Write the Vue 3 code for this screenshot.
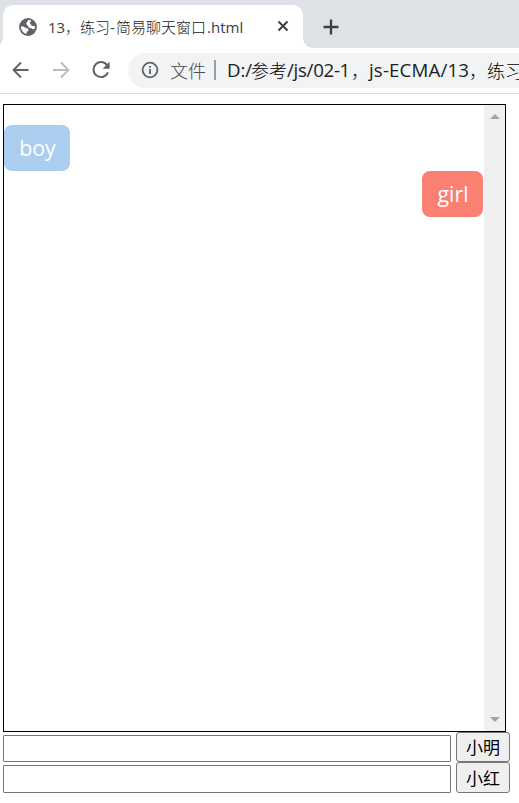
<script setup>
import { ref } from 'vue'

const tabTitle = [
  { text: '13', cls: 't-num' },
  { text: '，', cls: 't-comma' },
  { text: '练习', cls: 't-cjk' },
  { text: '-', cls: 't-dash' },
  { text: '简易聊天窗口', cls: 't-cjk' },
  { text: '.html', cls: 't-ext' }
]
const address = [
  { text: 'D:/', cls: 'u-drive' },
  { text: '参考', cls: 'u-cjk' },
  { text: '/js/02-1', cls: 'u-dir' },
  { text: '，', cls: 'u-comma' },
  { text: 'js-ECMA/13', cls: 'u-name' },
  { text: '，', cls: 'u-comma' },
  { text: '练习', cls: 'u-cjk' }
]
const messages = ref([
  { from: 'boy', text: 'boy' },
  { from: 'girl', text: 'girl' }
])
const senders = ref([
  { from: 'boy', name: '小明', draft: '' },
  { from: 'girl', name: '小红', draft: '' }
])

function send(sender) {
  if (!sender.draft) return
  messages.value.push({ from: sender.from, text: sender.draft })
  sender.draft = ''
}
</script>

<template>
  <div class="window">
    <header class="tabs">
      <div class="tab">
        <svg class="globe" width="18" height="18" viewBox="0 0 18 18">
          <circle cx="9" cy="9" r="8.9" fill="#5f6368" />
          <path d="M9.2 2C10.3 2 11.4 2.2 12.2 2.6C12.2 3.9 11 3.7 10.8 4.7C10.6 5.8 12.2 6.1 12.3 7.2C12.5 8.2 14 7.8 16 8.3C16 9.4 15.8 10.4 15.4 11.3C13.5 11.5 12.7 10.4 11.2 10.1C9.7 9.9 9 9.2 9 8.1C9 7 7.2 6.9 7.2 5.5C7.3 4.2 8.9 3.7 9.2 2Z" fill="#fff" />
          <path d="M2 8.6C4 8.1 5.4 8.8 6.2 9.5C7 10.3 8.7 9.9 9.3 11C9.9 12.1 9.3 13.3 8.2 13.6C7.3 13.9 7.6 15.1 7.4 15.9C4.4 15.2 1.9 12.4 2 8.6Z" fill="#fff" />
        </svg>
        <div class="title"><span v-for="(part, i) in tabTitle" :key="i" :class="part.cls">{{ part.text }}</span></div>
        <svg class="close" width="12" height="12" viewBox="0 0 12 12"><path d="M1.5 1.5 10.5 10.5M10.5 1.5 1.5 10.5" fill="none" stroke="#3c4043" stroke-width="2" /></svg>
      </div>
      <svg class="plus" width="16" height="16" viewBox="0 0 16 16"><path d="M8 .5V15.5M.5 8H15.5" fill="none" stroke="#3c4043" stroke-width="2.3" /></svg>
    </header>

    <nav class="toolbar">
      <svg class="nav-icon" width="18" height="18" viewBox="0 0 18 18"><path d="M16.5 9H2M9 1.5 1.6 9 9 16.5" fill="none" stroke="#5f6368" stroke-width="1.9" /></svg>
      <svg class="nav-icon" width="18" height="18" viewBox="0 0 18 18"><path d="M1 9H16M9 1.5 16.4 9 9 16.5" fill="none" stroke="#babcbe" stroke-width="1.9" /></svg>
      <svg class="nav-icon" width="18" height="18" viewBox="0 0 18 18">
        <path d="M15.3 4.4A7.5 7.5 0 1 0 16 11.3" fill="none" stroke="#5f6368" stroke-width="2" />
        <path d="M17.6 .8V7.8H10.6Z" fill="#5f6368" />
      </svg>
      <div class="address">
        <svg class="info" width="18" height="18" viewBox="0 0 18 18">
          <circle cx="9" cy="9" r="7.4" fill="none" stroke="#5f6368" stroke-width="1.8" />
          <path d="M9 8V13M9 5V6.8" stroke="#5f6368" stroke-width="1.9" />
        </svg>
        <span class="scheme">文件</span>
        <i class="divider"></i>
        <div class="url"><span v-for="(part, i) in address" :key="i" :class="part.cls">{{ part.text }}</span></div>
      </div>
    </nav>

    <main class="page">
      <section class="chat">
        <div class="messages">
          <p v-for="(message, i) in messages" :key="i" class="bubble" :class="message.from">{{ message.text }}</p>
        </div>
        <div class="scrollbar">
          <svg width="10" height="5" viewBox="0 0 10 5"><path d="M0 5 5 0 10 5Z" fill="#a3a3a3" /></svg>
          <svg width="10" height="5" viewBox="0 0 10 5"><path d="M0 0 5 5 10 0Z" fill="#a3a3a3" /></svg>
        </div>
      </section>
      <form v-for="sender in senders" :key="sender.name" class="row" :class="sender.from" @submit.prevent="send(sender)">
        <input v-model="sender.draft" type="text" />
        <button type="submit">{{ sender.name }}</button>
      </form>
    </main>
  </div>
</template>

<style>
body { background: #fff; overflow: hidden; }
</style>

<style scoped>
* { box-sizing: border-box; }
svg { display: block; flex: none; }
.window { width: 519px; height: 803px; overflow: hidden; font-family: "Open Sans", "Noto Sans CJK SC", sans-serif; }
.tabs { height: 48px; padding: 5px 0 0 3px; display: flex; background: #dee1e6; }
.tab { position: relative; width: 300px; height: 43px; padding-left: 16px; display: flex; align-items: center; background: #fff; border-radius: 10px 10px 0 0; }
.tab::before, .tab::after { content: ""; position: absolute; bottom: 0; width: 10px; height: 10px; }
.tab::before { left: -10px; background: radial-gradient(circle at 0 0, transparent 9.5px, #fff 10px); }
.tab::after { right: -10px; background: radial-gradient(circle at 100% 0, transparent 9.5px, #fff 10px); }
.title { display: flex; width: 229px; margin-left: 11px; font-size: 15px; line-height: 22px; color: #3c4043; white-space: nowrap; }
.title span, .url span { display: block; flex: none; }
.t-num { width: 17px; }
.t-comma { width: 15px; }
.t-dash { width: 6px; }
.t-comma, .u-comma, .t-cjk, .u-cjk, .scheme { font-family: "Noto Sans CJK SC", sans-serif; font-weight: 300; }
.t-cjk { color: #202124; }
.t-ext { margin-left: 1px; }
.close { margin-top: -1px; }
.plus { margin: 14px 0 0 20px; }
.toolbar { height: 46px; padding: 0 0 1px 12px; display: flex; align-items: center; border-bottom: 1px solid #dadce0; }
.nav-icon { margin-right: 22px; }
.address { flex: 1; height: 35px; margin: 1px 0 0 -4px; padding: 0 0 1px 13px; display: flex; align-items: center; overflow: hidden; background: #f1f3f4; border-radius: 18px 0 0 18px; font-size: 18px; line-height: 26px; white-space: nowrap; }
.scheme { width: 36px; margin-left: 11px; color: #4a4d51; }
.divider { flex: none; width: 2px; height: 20px; margin: 0 11px 0 8px; background: #9aa0a6; }
.url { display: flex; color: #202124; }
.u-drive, .u-dir, .u-name { font-size: 18.7px; letter-spacing: -.1px; }
.u-cjk { color: #000; }
.u-drive { width: 24px; }
.u-dir { width: 64px; letter-spacing: -.3px; }
.u-comma { width: 18px; }
.u-name { width: 100px; letter-spacing: .15px; }
.page { padding: 10px 0 0 3px; }
.chat { width: 503px; height: 628px; display: flex; border: 1px solid #000; }
.messages { flex: 1; padding-top: 20px; display: flex; flex-direction: column; align-items: flex-start; }
.bubble { height: 46px; margin: 0; padding: 0 15px; border-radius: 8px; color: #fff; font-size: 21.3px; line-height: 46px; text-align: center; }
.bubble.boy { width: 66px; padding: 0 14px 0 15px; background: #abcdef; }
.bubble.girl { width: 61px; padding: 0 14px 0 15px; margin-right: 1px; align-self: flex-end; background: salmon; }
.scrollbar { width: 21px; padding: 9px 0 9px 0; display: flex; flex-direction: column; justify-content: space-between; align-items: center; background: #f0f0f0; }
.row { height: 30px; display: flex; align-items: flex-start; gap: 5px; }
.row.girl { height: 31px; }
input { width: 448px; height: 27px; margin: 3px 0 0; padding: 1px 3px; border: 1px solid #767676; border-radius: 1px; background: #fff; font-size: 17px; outline: none; }
.row.girl input { height: 28px; }
button { width: 54px; height: 100%; padding: 0; border: 1px solid #767676; border-radius: 3px; background: #efefef; color: #000; font-family: "Noto Sans CJK SC", sans-serif; font-weight: 400; font-size: 17px; line-height: 26px; }
</style>
